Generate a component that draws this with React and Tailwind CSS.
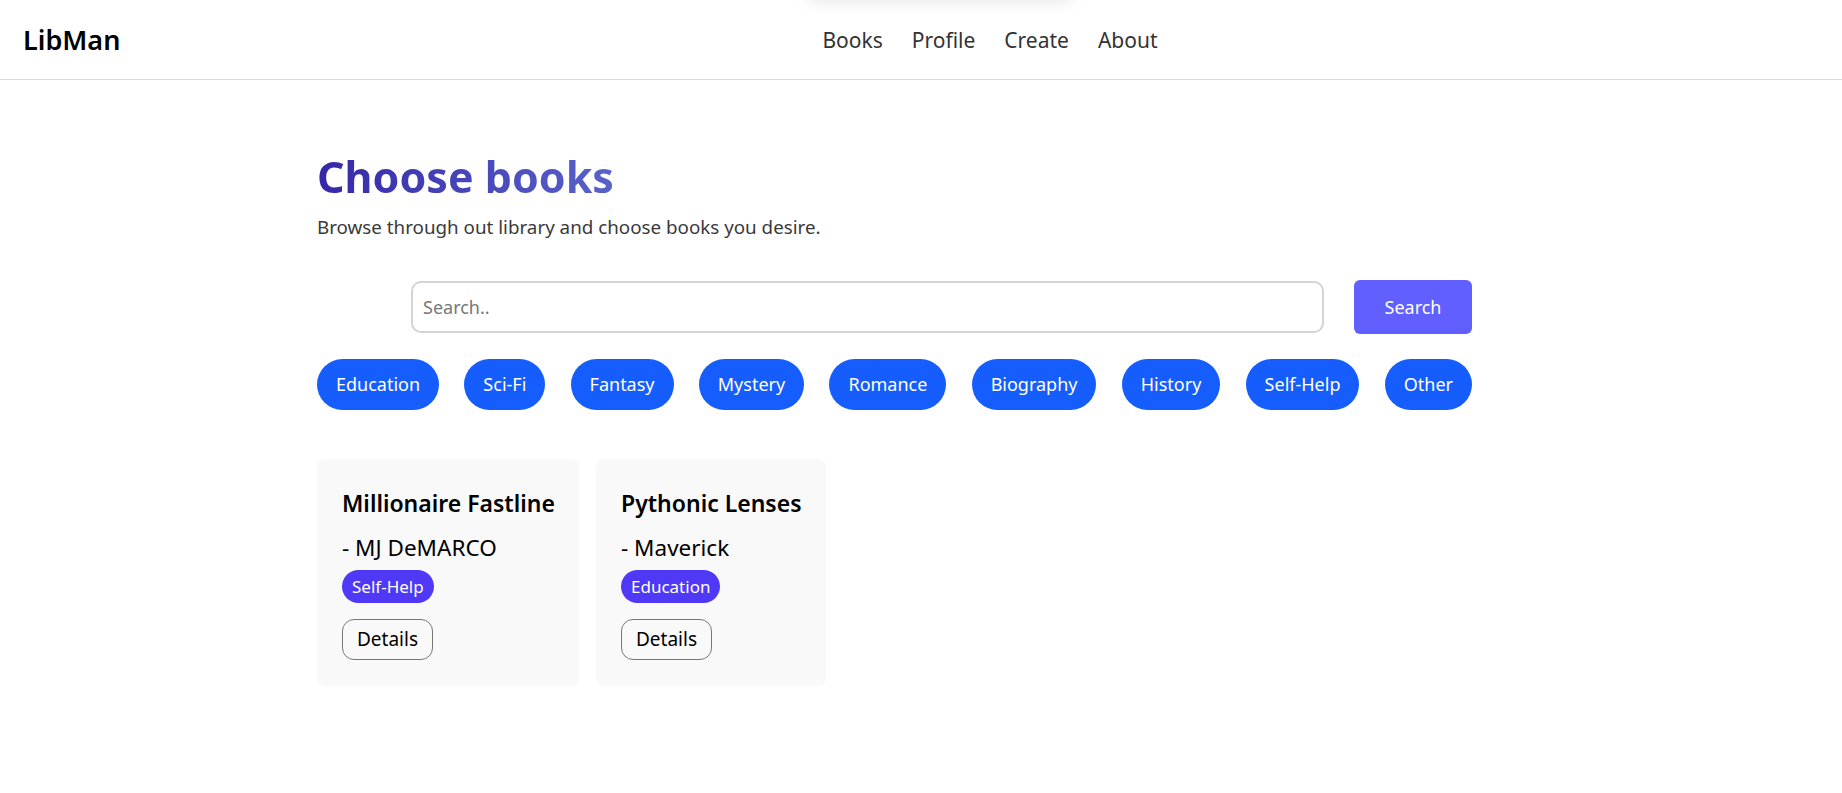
import React from 'react';

const categories = ['Education', 'Sci-Fi', 'Fantasy', 'Mystery', 'Romance', 'Biography', 'History', 'Self-Help', 'Other'];

const books = [
  { title: 'Millionaire Fastline', author: 'MJ DeMARCO', category: 'Self-Help', width: 'w-[262px]' },
  { title: 'Pythonic Lenses', author: 'Maverick', category: 'Education', width: 'w-[230px]' },
];

function Navbar() {
  return (
    <nav className="relative h-[80px] flex items-center border-b border-[#d9d9d9] bg-white">
      {/* faint shadow peeking from above the viewport */}
      <div className="absolute left-[805px] -top-[40px] w-[270px] h-[40px] rounded-xl shadow-[0_4px_14px_rgba(0,0,0,0.08)] bg-white" />
      <div className="pl-[23px] pt-[2px] text-[27px] font-semibold text-black">LibMan</div>
      <ul className="ml-[702px] pt-[3px] flex items-center gap-[29px] text-[21px] text-[#333]">
        <li>Books</li>
        <li>Profile</li>
        <li>Create</li>
        <li>About</li>
      </ul>
    </nav>
  );
}

function BookCard({ book }) {
  return (
    <div className={`${book.width} bg-[#f9f9f9] rounded-lg px-[25px] pt-[27px] pb-[26px]`}>
      <h3 className="text-[23px] font-semibold text-black leading-[34px] whitespace-nowrap">{book.title}</h3>
      <p className="mt-[14px] text-[22.5px] text-black leading-[28px]">- {book.author}</p>
      <span className="mt-[8px] inline-block bg-[#4f39f6] text-white text-[17px] leading-[33px] px-[10px] rounded-full">
        {book.category}
      </span>
      <div className="mt-[16px]">
        <button className="h-[41px] px-[14px] border border-[#777] rounded-xl text-[19px] text-black bg-transparent">
          Details
        </button>
      </div>
    </div>
  );
}

export default function App() {
  return (
    <div className="min-h-[793px] bg-white" style={{ fontFamily: '"Noto Sans", "Open Sans", sans-serif' }}>
      <Navbar />
      <main className="w-[1155px] ml-[317px] pt-[68px]">
        <h1 className="text-[43px] font-bold leading-[58px] bg-gradient-to-r from-[#3626a8] to-[#5a62c9] bg-clip-text text-transparent w-fit">
          Choose books
        </h1>
        <p className="mt-[8px] text-[18.8px] leading-[26px] text-[#3a3a3a]">Browse through out library and choose books you desire.</p>

        <div className="mt-[41px] flex justify-end gap-[30px]">
          <input
            type="text"
            placeholder="Search.."
            className="w-[913px] h-[52px] px-[10px] border-2 border-[#d4d4d4] rounded-[10px] text-[18px] placeholder:text-[#777] outline-none"
          />
          <button className="w-[118px] h-[54px] -mt-[1px] bg-[#615fff] text-white text-[18px] rounded-md">Search</button>
        </div>

        <div className="mt-[25px] flex justify-between">
          {categories.map((c) => (
            <button key={c} className="h-[51px] px-[19px] bg-[#155dfc] text-white text-[18px] rounded-full">
              {c}
            </button>
          ))}
        </div>

        <div className="mt-[49px] flex gap-[17px] items-start">
          {books.map((b) => (
            <BookCard key={b.title} book={b} />
          ))}
        </div>
      </main>
    </div>
  );
}
